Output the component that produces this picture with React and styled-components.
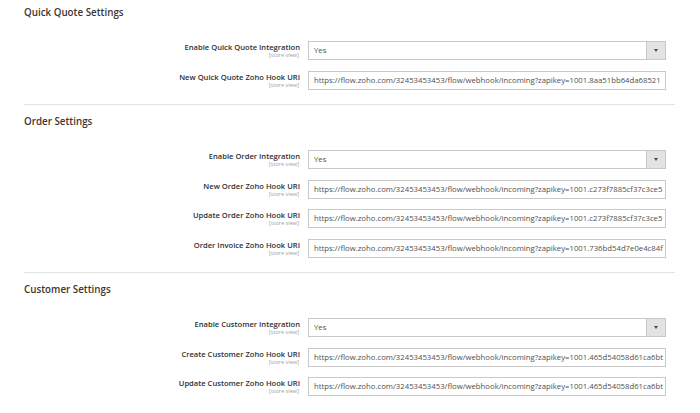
import React from "react";
import styled, { createGlobalStyle } from "styled-components";

const GlobalStyle = createGlobalStyle`
  body {
    margin: 0;
    background: #ffffff;
    font-family: "Open Sans", "Liberation Sans", sans-serif;
  }
`;

const Page = styled.main`
  width: 700px;
  height: 413px;
  padding: 0 25px 0 24px;
  box-sizing: border-box;
  overflow: hidden;
`;

const Section = styled.section`
  padding: ${(p) => (p.$first ? "6px" : "10px")} 0 14.5px;
  border-top: ${(p) => (p.$first ? "none" : "1px solid #e3e3e3")};
`;

const Title = styled.h2`
  margin: 0 0 21px;
  font-size: 9.8px;
  line-height: 14px;
  font-weight: 600;
  color: #41362f;
`;

const Fields = styled.div`
  display: flex;
  flex-direction: column;
  gap: 10.5px;
`;

const Row = styled.div`
  display: grid;
  grid-template-columns: 276px 358px;
  column-gap: 8px;
  align-items: start;
`;

const Label = styled.div`
  display: flex;
  flex-direction: column;
  align-items: flex-end;
  padding-top: 1px;
`;

const LabelText = styled.span`
  font-size: 7.6px;
  line-height: 10px;
  font-weight: 600;
  color: #303030;
  white-space: nowrap;
`;

const Scope = styled.span`
  font-size: 5.6px;
  line-height: 6px;
  color: #a0a0a0;
  margin-right: 1px;
`;

const Control = styled.div`
  position: relative;
  height: 19px;
  box-sizing: border-box;
  border: 1px solid #c9c9c9;
  background: #ffffff;
  padding-left: 5px;
  font-size: 7.75px;
  line-height: 17px;
  color: #505050;
  white-space: nowrap;
  overflow: hidden;
`;

const Arrow = styled.span`
  position: absolute;
  top: 0;
  right: 0;
  bottom: 0;
  width: 18px;
  background: #e3e3e3;
  border-left: 1px solid #c8c8c8;
  display: flex;
  align-items: center;
  justify-content: center;

  &::after {
    content: "";
    border-left: 2.5px solid transparent;
    border-right: 2.5px solid transparent;
    border-top: 3px solid #514943;
  }
`;

const base = "https://flow.zoho.com/32453453453/flow/webhook/incoming?zapikey=";

const sections = [
  {
    title: "Quick Quote Settings",
    fields: [
      { label: "Enable Quick Quote Integration", select: "Yes" },
      { label: "New Quick Quote Zoho Hook URI", value: base + "1001.8aa51bb64da68521" },
    ],
  },
  {
    title: "Order Settings",
    fields: [
      { label: "Enable Order Integration", select: "Yes" },
      { label: "New Order Zoho Hook URI", value: base + "1001.c273f7885cf37c3ce5" },
      { label: "Update Order Zoho Hook URI", value: base + "1001.c273f7885cf37c3ce5" },
      { label: "Order Invoice Zoho Hook URI", value: base + "1001.736bd54d7e0e4c84f" },
    ],
  },
  {
    title: "Customer Settings",
    fields: [
      { label: "Enable Customer Integration", select: "Yes" },
      { label: "Create Customer Zoho Hook URI", value: base + "1001.465d54058d61ca6bt" },
      { label: "Update Customer Zoho Hook URI", value: base + "1001.465d54058d61ca6bt" },
    ],
  },
];

export default function App() {
  return (
    <Page>
      <GlobalStyle />
      {sections.map((section, i) => (
        <Section key={section.title} $first={i === 0}>
          <Title>{section.title}</Title>
          <Fields>
            {section.fields.map((field) => (
              <Row key={field.label}>
                <Label>
                  <LabelText>{field.label}</LabelText>
                  <Scope>[store view]</Scope>
                </Label>
                <Control>
                  {field.select ?? field.value}
                  {field.select && <Arrow />}
                </Control>
              </Row>
            ))}
          </Fields>
        </Section>
      ))}
    </Page>
  );
}
